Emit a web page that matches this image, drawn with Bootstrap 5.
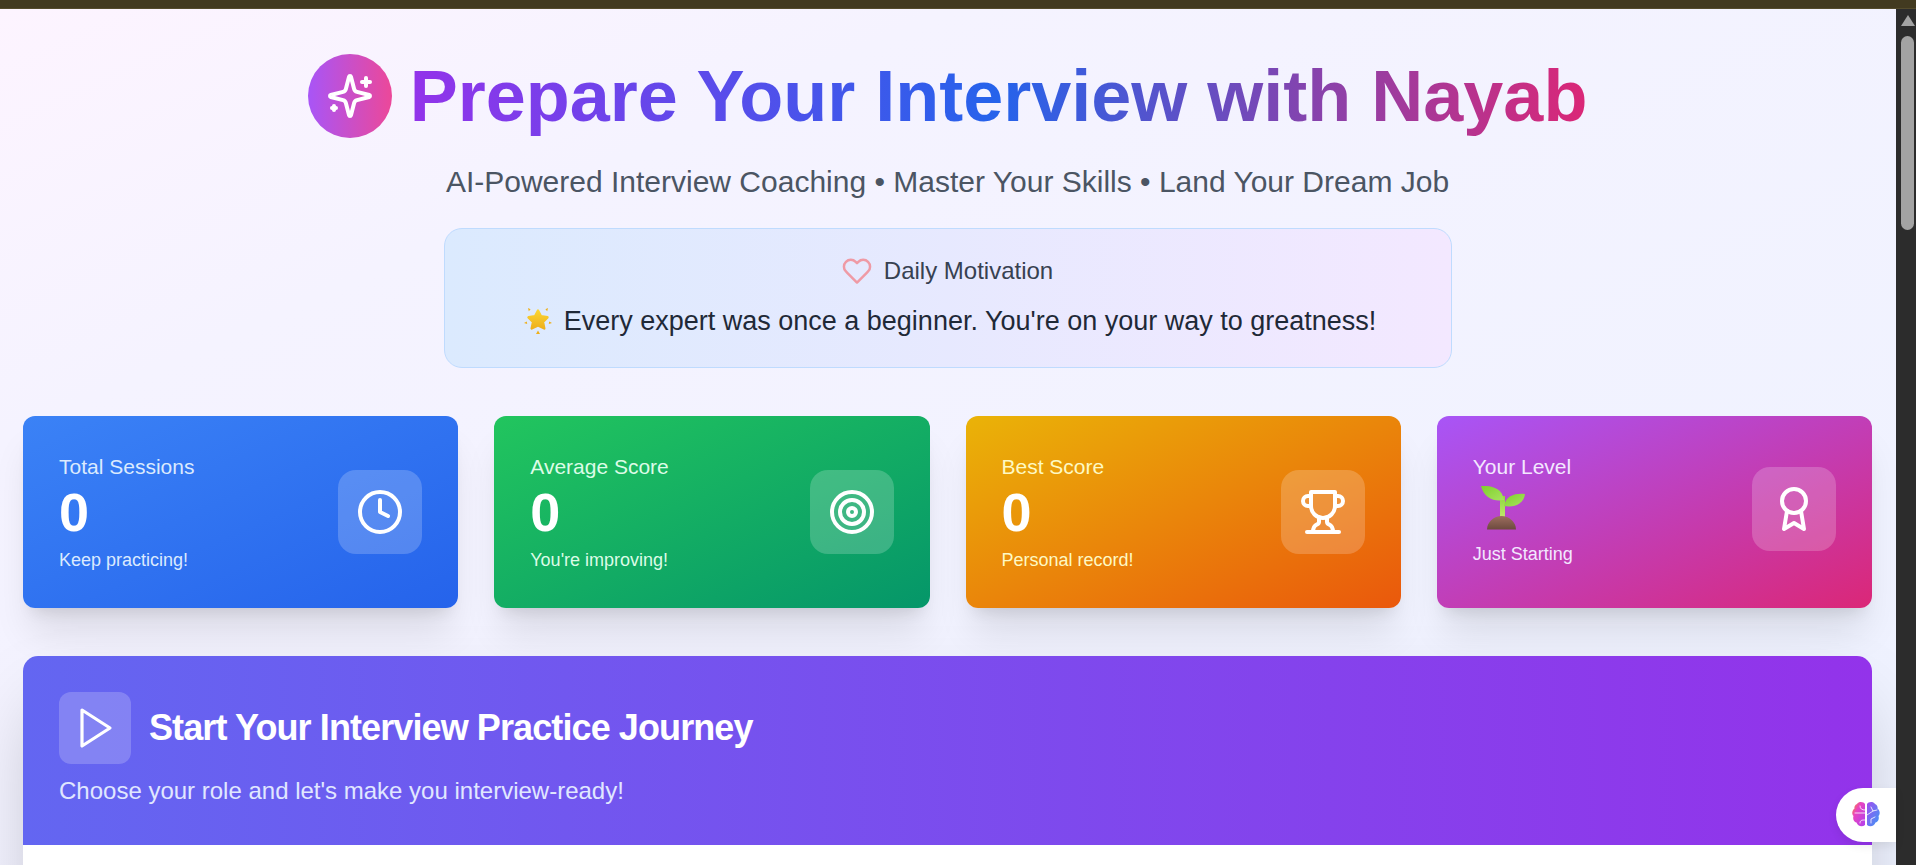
<!DOCTYPE html>
<html lang="en">
<head>
<meta charset="utf-8">
<title>Prepare Your Interview with Nayab</title>
<link href="https://cdn.jsdelivr.net/npm/bootstrap@5.3.0/dist/css/bootstrap.min.css" rel="stylesheet">
<style>
html,body{height:100%;overflow:hidden;margin:0}
body{font-family:"Liberation Sans",Arial,sans-serif;background:#2c2c2c}
.top-strip{height:9px;background:#423a20;border-bottom:1px solid #544b2c}
.shell{height:856px}
.page-area{flex:1 1 auto;min-width:0;overflow:hidden;padding:45px 24px 0 23px;background:linear-gradient(to bottom right,#fdf4ff 0%,#f5f3ff 25%,#eef2ff 100%)}
.hero-title{gap:18px;margin:0 0 23px}
.hero-badge{width:84px;height:84px;border-radius:50%;background:linear-gradient(to right,#a855f7,#ec4899);flex:none}
.hero-text{font-size:72px;font-weight:700;line-height:84px;background:linear-gradient(90deg,#9333ea,#2563eb,#db2777);-webkit-background-clip:text;background-clip:text;color:transparent}
.hero-sub{font-size:30px;line-height:42px;color:#4b5563;margin:0 0 25px}
.motivation{width:1008px;height:140px;padding:24px;margin:0 auto 48px;border:1.5px solid #bfdbfe;border-radius:18px;background:linear-gradient(90deg,#dbeafe,#f3e8ff)}
.motivation-head{font-size:24px;line-height:36px;color:#374151;gap:12px;margin-bottom:12px}
.motivation-quote{font-size:27px;line-height:40px;color:#1f2937;gap:12px;padding-left:5px}
.stat-grid{display:grid;grid-template-columns:repeat(4,1fr);gap:36px;margin-bottom:48px}
.stat-card{border:0;border-radius:12px;padding:36px;color:#fff;height:192px;box-shadow:0 30px 37px -7px rgba(0,0,0,.1),0 12px 15px -9px rgba(0,0,0,.1)}
.stat-blue{background:linear-gradient(to bottom right,#3b82f6,#2563eb)}
.stat-green{background:linear-gradient(to bottom right,#22c55e,#059669)}
.stat-amber{background:linear-gradient(to bottom right,#eab308,#ea580c)}
.stat-violet{background:linear-gradient(to bottom right,#a855f7,#db2777)}
.stat-label{font-size:21px;line-height:30px}
.stat-value{font-size:54px;font-weight:700;line-height:60px;margin-bottom:6px}
.stat-plant{height:60px;padding-left:7px;padding-top:4px}
.stat-note{font-size:18px;line-height:24px}
.tint-blue{color:#dbeafe}.tint-green{color:#dcfce7}.tint-amber{color:#fef9c3}.tint-violet{color:#f3e8ff}
.stat-icon{width:84px;height:84px;border-radius:18px;background:rgba(255,255,255,.2);flex:none}
.journey{border-radius:15px 15px 0 0;background:#fff;box-shadow:0 37px 75px -18px rgba(0,0,0,.25);overflow:hidden;height:400px;border:0}
.journey-head{height:189px;padding:36px;background:linear-gradient(90deg,#6366f1,#9333ea)}
.journey-icon{width:72px;height:72px;border-radius:12px;background:rgba(255,255,255,.2);flex:none}
.journey-title{font-size:36px;line-height:54px;font-weight:700;color:#fff;margin:0;gap:18px;letter-spacing:-.025em}
.journey-sub{font-size:24px;line-height:36px;color:#e0e7ff;margin:9px 0 0}
.fake-scroll{width:20px;flex:none;background:#2c2c2c;padding:6px 2px 0 5px;gap:10px}
.scroll-arrow{width:0;height:0;border-left:7px solid transparent;border-right:7px solid transparent;border-bottom:11px solid #a3a3a3}
.scroll-thumb{width:13px;height:194px;border-radius:7px;background:#a3a3a3}
.brain-tab{right:20px;top:788px;width:60px;height:54px;background:#fff;border-radius:27px 0 0 27px;box-shadow:0 4px 10px rgba(0,0,0,.08)}
svg{display:block;flex:none}
</style>
</head>
<body class="position-relative">
<div class="top-strip"></div>
<div class="shell d-flex">
  <main class="page-area">
    <h1 class="hero-title d-flex align-items-center justify-content-center">
      <span class="hero-badge d-flex align-items-center justify-content-center">
        <svg width="48" height="48" viewBox="0 0 24 24" fill="none" stroke="#fff" stroke-width="2" stroke-linecap="round" stroke-linejoin="round"><path d="M9.937 15.5A2 2 0 0 0 8.5 14.063l-6.135-1.582a.5.5 0 0 1 0-.962L8.5 9.936A2 2 0 0 0 9.937 8.5l1.582-6.135a.5.5 0 0 1 .963 0L14.063 8.5A2 2 0 0 0 15.5 9.937l6.135 1.581a.5.5 0 0 1 0 .964L15.5 14.063a2 2 0 0 0-1.437 1.437l-1.582 6.135a.5.5 0 0 1-.963 0z"/><path d="M20 3v4"/><path d="M22 5h-4"/><path d="M4 17v2"/><path d="M5 18H3"/></svg>
      </span>
      <span class="hero-text">Prepare Your Interview with Nayab</span>
    </h1>
    <p class="hero-sub text-center">AI-Powered Interview Coaching • Master Your Skills • Land Your Dream Job</p>
    <section class="motivation">
      <div class="motivation-head d-flex align-items-center justify-content-center">
        <svg width="30" height="30" viewBox="0 0 24 24" fill="none" stroke="#ef9aa5" stroke-width="2" stroke-linecap="round" stroke-linejoin="round"><path d="M20.84 4.61a5.5 5.5 0 0 0-7.78 0L12 5.67l-1.06-1.06a5.5 5.5 0 0 0-7.78 7.78l1.06 1.06L12 21.23l7.78-7.78 1.06-1.06a5.5 5.5 0 0 0 0-7.78z"/></svg>
        <span>Daily Motivation</span>
      </div>
      <div class="motivation-quote d-flex align-items-center justify-content-center">
        <svg width="28" height="28" viewBox="0 0 28 28"><defs><linearGradient id="starFill" x1="0" y1="0" x2="0" y2="1"><stop offset="0" stop-color="#fbd534"/><stop offset="1" stop-color="#eeb01b"/></linearGradient></defs><path d="M14 3.500L17 9.300L23.500 10.300L19 15L20.300 21.500L14 18.500L7.700 21.500L9 15L4.500 10.300L11 9.300z" fill="url(#starFill)" stroke="url(#starFill)" stroke-width="2.400" stroke-linejoin="round"/><path d="M4 1l2.600 1.200-1.800 2zM24 1l-2.600 1.200 1.800 2zM0 16l2.800-1.400.4 2.400zM28 16l-2.800-1.400-.4 2.400zM14 23.500l2 3.500h-4z" fill="#eeb01b"/></svg>
        <span>Every expert was once a beginner. You're on your way to greatness!</span>
      </div>
    </section>
    <section class="stat-grid">
      <div class="card stat-card stat-blue">
        <div class="d-flex align-items-center justify-content-between">
          <div><div class="stat-label tint-blue">Total Sessions</div><div class="stat-value">0</div><div class="stat-note tint-blue">Keep practicing!</div></div>
          <div class="stat-icon d-flex align-items-center justify-content-center"><svg width="48" height="48" viewBox="0 0 24 24" fill="none" stroke="#fff" stroke-width="2" stroke-linecap="round" stroke-linejoin="round"><circle cx="12" cy="12" r="10"/><polyline points="12 6 12 12 16 14"/></svg></div>
        </div>
      </div>
      <div class="card stat-card stat-green">
        <div class="d-flex align-items-center justify-content-between">
          <div><div class="stat-label tint-green">Average Score</div><div class="stat-value">0</div><div class="stat-note tint-green">You're improving!</div></div>
          <div class="stat-icon d-flex align-items-center justify-content-center"><svg width="48" height="48" viewBox="0 0 24 24" fill="none" stroke="#fff" stroke-width="2" stroke-linecap="round" stroke-linejoin="round"><circle cx="12" cy="12" r="10"/><circle cx="12" cy="12" r="6"/><circle cx="12" cy="12" r="2"/></svg></div>
        </div>
      </div>
      <div class="card stat-card stat-amber">
        <div class="d-flex align-items-center justify-content-between">
          <div><div class="stat-label tint-amber">Best Score</div><div class="stat-value">0</div><div class="stat-note tint-amber">Personal record!</div></div>
          <div class="stat-icon d-flex align-items-center justify-content-center"><svg width="48" height="48" viewBox="0 0 24 24" fill="none" stroke="#fff" stroke-width="2" stroke-linecap="round" stroke-linejoin="round"><path d="M6 9H4.500a2.500 2.500 0 0 1 0-5H6"/><path d="M18 9h1.500a2.500 2.500 0 0 0 0-5H18"/><path d="M4 22h16"/><path d="M10 14.660V17c0 .55-.47.98-.97 1.210C7.850 18.750 7 20.240 7 22"/><path d="M14 14.660V17c0 .55.47.98.97 1.210C16.150 18.750 17 20.240 17 22"/><path d="M18 2H6v7a6 6 0 0 0 12 0V2Z"/></svg></div>
        </div>
      </div>
      <div class="card stat-card stat-violet">
        <div class="d-flex align-items-center justify-content-between">
          <div>
            <div class="stat-label tint-violet">Your Level</div>
            <div class="stat-plant">
              <svg width="46" height="44" viewBox="0 0 46 44"><defs><linearGradient id="leafA" x1="0" y1="0" x2="1" y2="1"><stop offset="0" stop-color="#7fd02c"/><stop offset="1" stop-color="#a8e25f"/></linearGradient><linearGradient id="stemB" x1="0" y1="0" x2="0" y2="1"><stop offset="0" stop-color="#8fd63f"/><stop offset="1" stop-color="#c6ec72"/></linearGradient><linearGradient id="soilC" x1="0" y1="0" x2="0" y2="1"><stop offset="0" stop-color="#9d6e5f"/><stop offset="1" stop-color="#6d4a3e"/></linearGradient></defs><rect x="20" y="10" width="5" height="24" fill="url(#stemB)"/><path d="M1 0C10-.5 22 1 24 14C14 16 4 12 1 0z" fill="url(#leafA)"/><path d="M45 8C36 7 26 9 24 20C34 22 44 18 45 8z" fill="url(#leafA)"/><path d="M7 43.500C7 36 14 30 21.500 30S36 36 36 43.500z" fill="url(#soilC)"/></svg>
            </div>
            <div class="stat-note tint-violet">Just Starting</div>
          </div>
          <div class="stat-icon d-flex align-items-center justify-content-center"><svg width="48" height="48" viewBox="0 0 24 24" fill="none" stroke="#fff" stroke-width="2" stroke-linecap="round" stroke-linejoin="round"><circle cx="12" cy="8" r="6"/><path d="M15.477 12.890 17 22l-5-3-5 3 1.523-9.110"/></svg></div>
        </div>
      </div>
    </section>
    <section class="card journey">
      <div class="journey-head">
        <h2 class="journey-title d-flex align-items-center">
          <span class="journey-icon d-flex align-items-center justify-content-center"><svg width="48" height="48" viewBox="-0.5 0 24 24" fill="none" stroke="#fff" stroke-width="1.600" stroke-linecap="round" stroke-linejoin="round"><polygon points="5 3 19 12 5 21 5 3"/></svg></span>
          <span>Start Your Interview Practice Journey</span>
        </h2>
        <p class="journey-sub">Choose your role and let's make you interview-ready!</p>
      </div>
    </section>
  </main>
  <aside class="fake-scroll d-flex flex-column"><div class="scroll-arrow"></div><div class="scroll-thumb"></div></aside>
</div>
<div class="brain-tab position-absolute d-flex align-items-center justify-content-center">
  <svg width="30" height="28" viewBox="0 0 30 28"><defs><linearGradient id="brainL" x1="0" y1="0" x2="1" y2="1"><stop offset="0" stop-color="#fb8b24"/><stop offset=".35" stop-color="#e944c0"/><stop offset="1" stop-color="#b040ee"/></linearGradient><linearGradient id="brainR" x1="0" y1="0" x2="1" y2="1"><stop offset="0" stop-color="#a14df0"/><stop offset="1" stop-color="#3b9bf5"/></linearGradient></defs><path d="M14 3c-1-2-6-3-8 0-2 .5-3 3-2.500 4.500C1 9.500.5 13 2.500 15 1.500 18 3 21 5.500 21.500 6.500 25 11 26.500 14 24z" fill="url(#brainL)"/><path d="M16 3c1-2 6-3 8 0 2 .5 3 3 2.500 4.500 2.500 2 3 5.500 1 7.500 1 3-.5 6-3 6.500C23.500 25 19 26.500 16 24z" fill="url(#brainR)"/><path d="M14 12H4M9 5c0 3 2 4 5 4M14 19c-3 0-5 0-5 3M20 6l2 4 4-1M22 10l-6 4M20 22v-4l4-2" fill="none" stroke="#fff" stroke-width="1" stroke-linecap="round" stroke-opacity=".8"/></svg>
</div>
<script src="https://cdn.jsdelivr.net/npm/bootstrap@5.3.0/dist/js/bootstrap.bundle.min.js"></script>
</body>
</html>
